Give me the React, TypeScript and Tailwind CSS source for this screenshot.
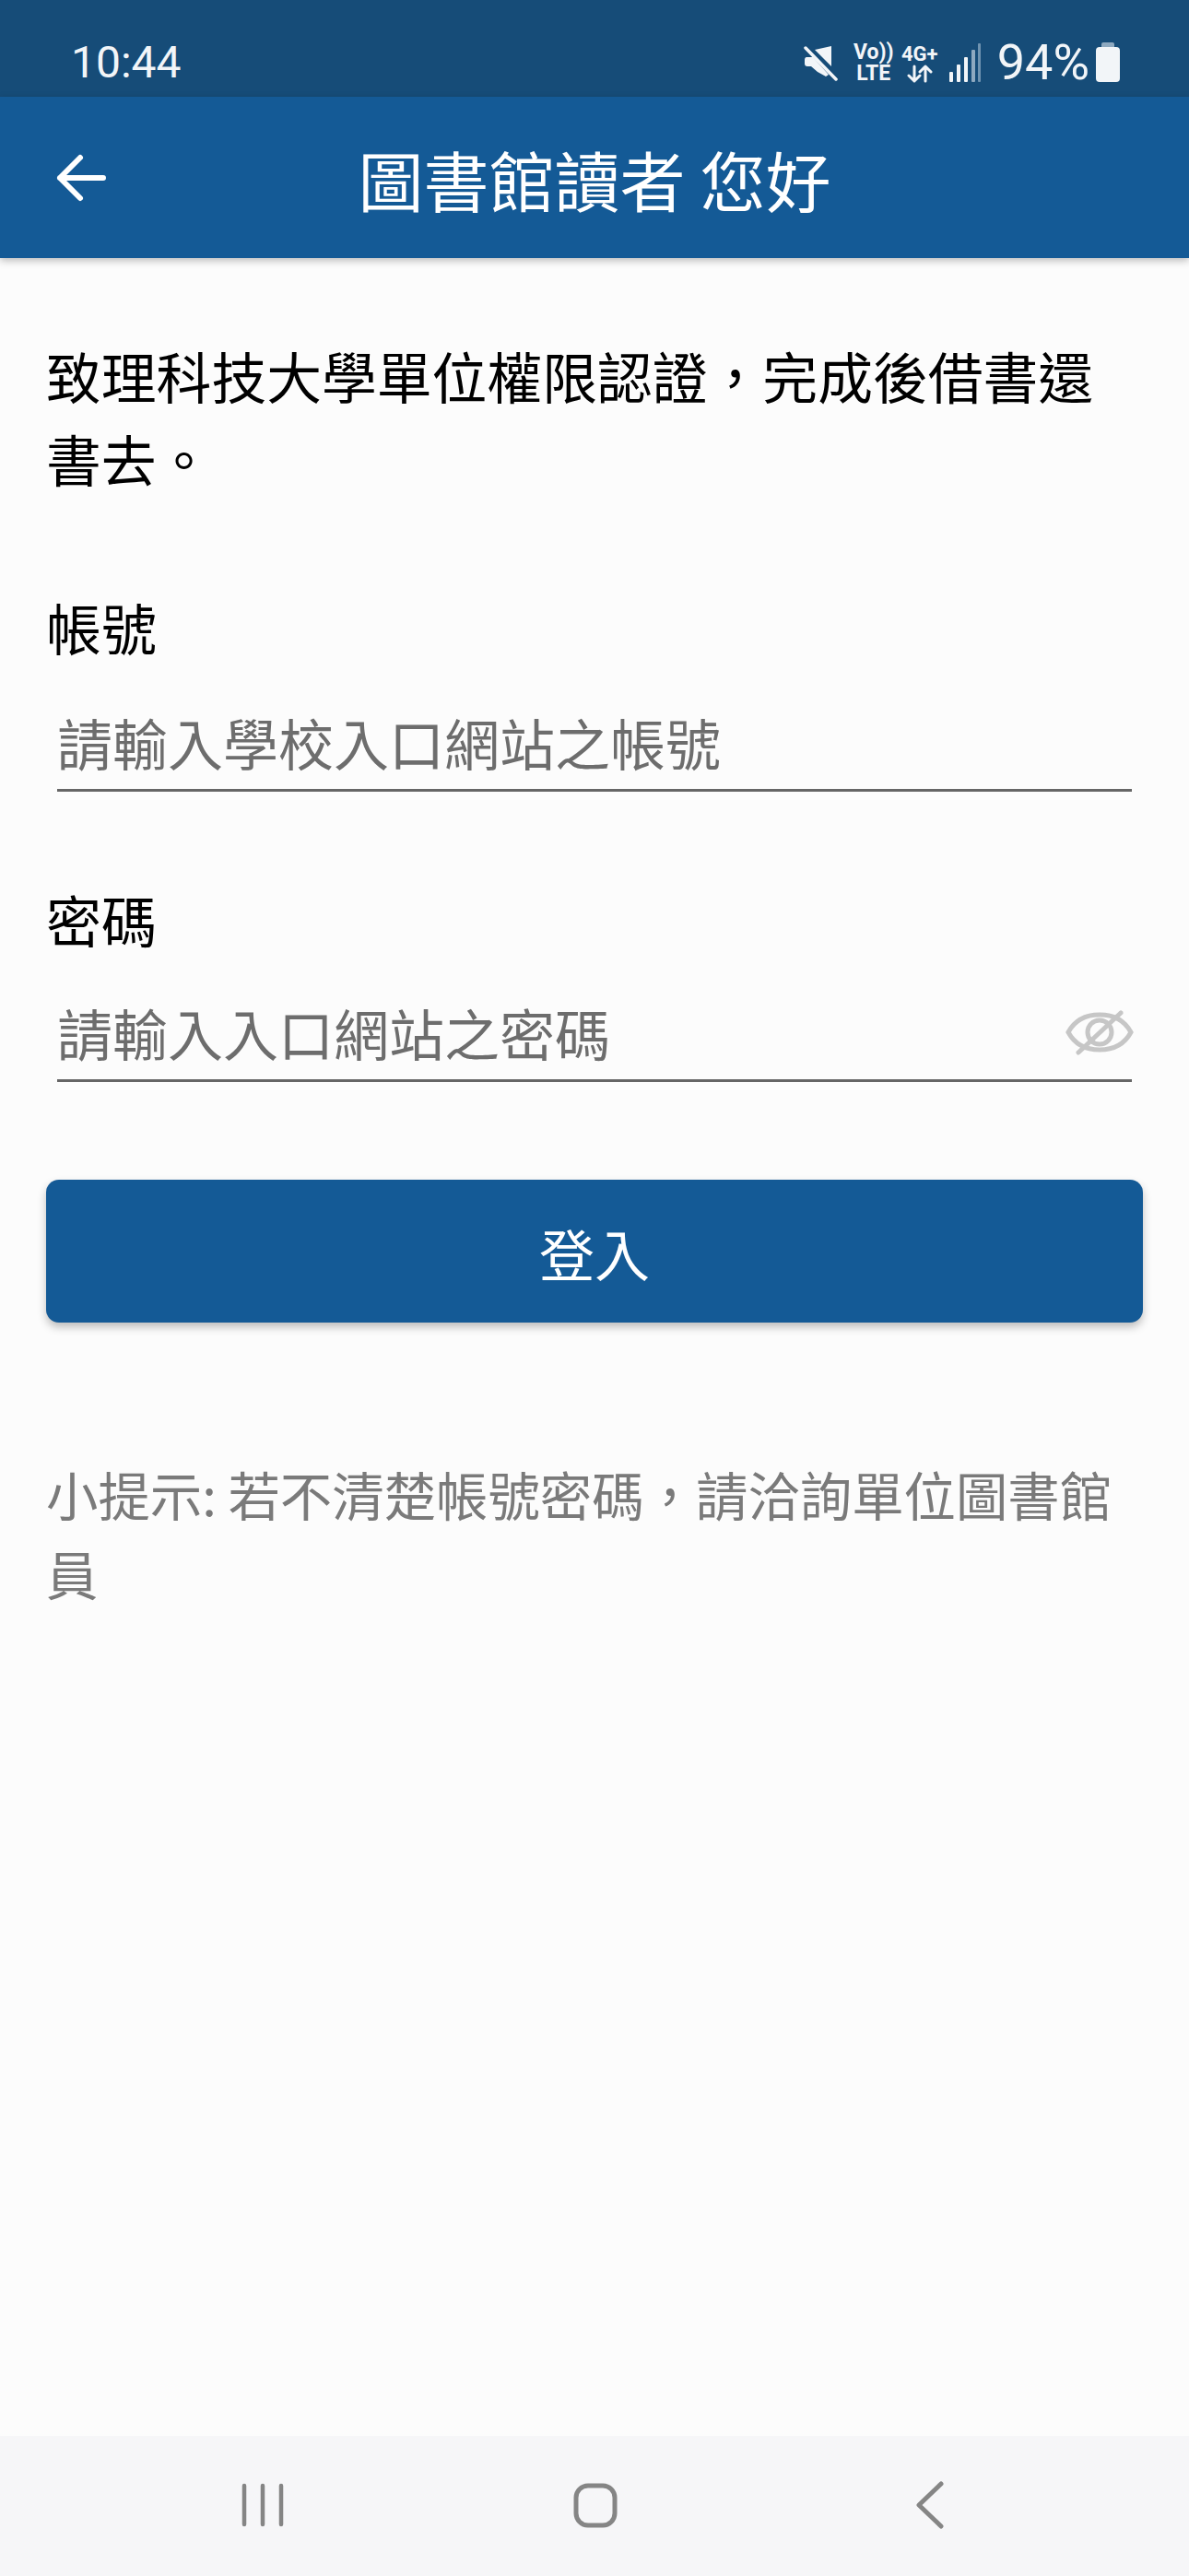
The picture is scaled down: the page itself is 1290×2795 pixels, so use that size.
import React from "react";

const cjk = { fontFamily: '"Noto Sans CJK TC", "Noto Sans", sans-serif' };

function Mute() {
  return (
    <svg width="40" height="40" viewBox="0 0 40 40" fill="#f2f5f8">
      <path d="M31 2v22L13 6z" />
      <path d="M4 14h7l17 19-3 2-9-5-7-6H5c-2 0-3-1-3-3v-4c0-2 1-3 2-3z" />
      <path d="M3 4 36 38" stroke="#f2f5f8" strokeWidth="3.5" strokeLinecap="round" />
      <path d="M6 2 39 36" stroke="#164c78" strokeWidth="2.5" />
    </svg>
  );
}

function Arrows() {
  return (
    <svg width="28" height="20" viewBox="0 0 28 20" fill="none" stroke="#f2f5f8" strokeWidth="3" strokeLinecap="round" strokeLinejoin="round">
      <path d="M8 2v16M2 12l6 6 6-6" />
      <path d="M20 18V2M14 8l6-6 6 6" />
    </svg>
  );
}

function Signal() {
  return (
    <svg width="36" height="44" viewBox="0 0 36 44">
      <rect x="1" y="32" width="4" height="11" rx="1" fill="#f2f5f8" />
      <rect x="9" y="24" width="4" height="19" rx="1" fill="#f2f5f8" />
      <rect x="17" y="16" width="4" height="27" rx="1" fill="#f2f5f8" />
      <rect x="25" y="8" width="4" height="35" rx="1" fill="#8ea9c0" />
      <rect x="32" y="1" width="3" height="42" rx="1" fill="#6f93b0" />
    </svg>
  );
}

function Battery() {
  return (
    <svg width="28" height="44" viewBox="0 0 28 44">
      <rect x="7" y="0" width="14" height="8" rx="2" fill="#8ea9c0" />
      <rect x="1" y="5" width="26" height="38" rx="4" fill="#f2f5f8" />
    </svg>
  );
}

function Eye() {
  return (
    <svg width="74" height="50" viewBox="0 0 74 50" fill="none" stroke="#c6c6c6" strokeWidth="5">
      <path d="M3 25C10 12 22 6 37 6s27 6 34 19c-7 13-19 19-34 19S10 38 3 25z" />
      <circle cx="37" cy="25" r="13" />
      <path d="M60 4 14 47" strokeLinecap="round" />
    </svg>
  );
}

export default function App() {
  return (
    <div className="flex h-[2795px] w-[1290px] flex-col overflow-hidden bg-[#fcfcfc]" style={cjk}>
      <div className="flex h-[105px] items-start justify-between bg-[#164c78] pl-[77px] pr-[74px] pt-[38px] text-[#f2f5f8]">
        <span className="font-['Roboto'] text-[48px] leading-[60px]">10:44</span>
        <div className="flex h-[60px] items-center">
          <Mute />
          <div className="ml-[17px] flex w-[40px] flex-col items-center font-['Roboto'] text-[23px] font-bold leading-[23px]">
            <span>Vo))</span>
            <span>LTE</span>
          </div>
          <div className="ml-[10px] flex w-[40px] flex-col items-center font-['Roboto'] text-[22px] font-bold leading-[23px]">
            <span>4G+</span>
            <Arrows />
          </div>
          <div className="ml-[11px]">
            <Signal />
          </div>
          <span className="ml-[17px] font-['Roboto'] text-[54px] leading-[60px]">94%</span>
          <div className="ml-[6px]">
            <Battery />
          </div>
        </div>
      </div>

      <header className="relative flex h-[175px] items-center bg-[#145a96] shadow-[0_3px_8px_rgba(0,0,0,0.25)]">
        <svg className="ml-[60px]" width="56" height="56" viewBox="0 0 56 56" fill="none" stroke="#ffffff" strokeWidth="6" strokeLinecap="round" strokeLinejoin="round">
          <path d="M52 28H5M27 6 5 28l22 22" />
        </svg>
        <h1 className="absolute inset-x-0 text-center text-[71px] font-normal leading-[90px] text-white">圖書館讀者 您好</h1>
      </header>

      <main className="flex-1 px-[50px] pt-[82px] text-black">
        <p className="w-[1190px] text-[59.8px] leading-[90px]">{"致理科技大學單位權限認證\uFF0C完成後借書還書去。"}</p>

        <label className="mt-[98px] block text-[60px] leading-[80px]">帳號</label>
        <div className="mx-[12px] mt-[36px] h-[103px] border-b-[3px] border-[#666666] pt-[9px] text-[60px] leading-[80px] text-[#6d6d6d]">
          請輸入學校入口網站之帳號
        </div>

        <label className="mt-[98px] block text-[60px] leading-[80px]">密碼</label>
        <div className="mx-[12px] mt-[34px] flex h-[103px] justify-between border-b-[3px] border-[#666666] pt-[9px] text-[60px] leading-[80px] text-[#6d6d6d]">
          <span>請輸入入口網站之密碼</span>
          <div className="mr-[-2px] mt-[15px]">
            <Eye />
          </div>
        </div>

        <button className="mt-[106px] flex h-[155px] w-[1190px] items-center justify-center rounded-[14px] bg-[#145a96] pt-[3px] text-[60px] text-white shadow-[0_5px_10px_rgba(0,0,0,0.25)]">
          登入
        </button>

        <p className="mt-[143px] w-[1170px] text-[56.4px] leading-[86px] text-[#7a7a7a]">{"小提示: 若不清楚帳號密碼\uFF0C請洽詢單位圖書館員"}</p>
      </main>

      <nav className="flex h-[152px] items-center bg-[#f6f6f8] pb-[3px] pl-[262px]">
        <svg width="46" height="50" viewBox="0 0 46 50" stroke="#858585" strokeWidth="4.5" strokeLinecap="round">
          <path d="M3 4v42M23 4v42M43 4v42" />
        </svg>
        <svg className="ml-[314px]" width="48" height="50" viewBox="0 0 48 50" fill="none" stroke="#858585" strokeWidth="5">
          <rect x="3" y="4" width="42" height="43" rx="13" />
        </svg>
        <svg className="ml-[324px]" width="30" height="52" viewBox="0 0 30 52" fill="none" stroke="#858585" strokeWidth="5" strokeLinecap="round" strokeLinejoin="round">
          <path d="M27 3 3 26l24 23" />
        </svg>
      </nav>
    </div>
  );
}
